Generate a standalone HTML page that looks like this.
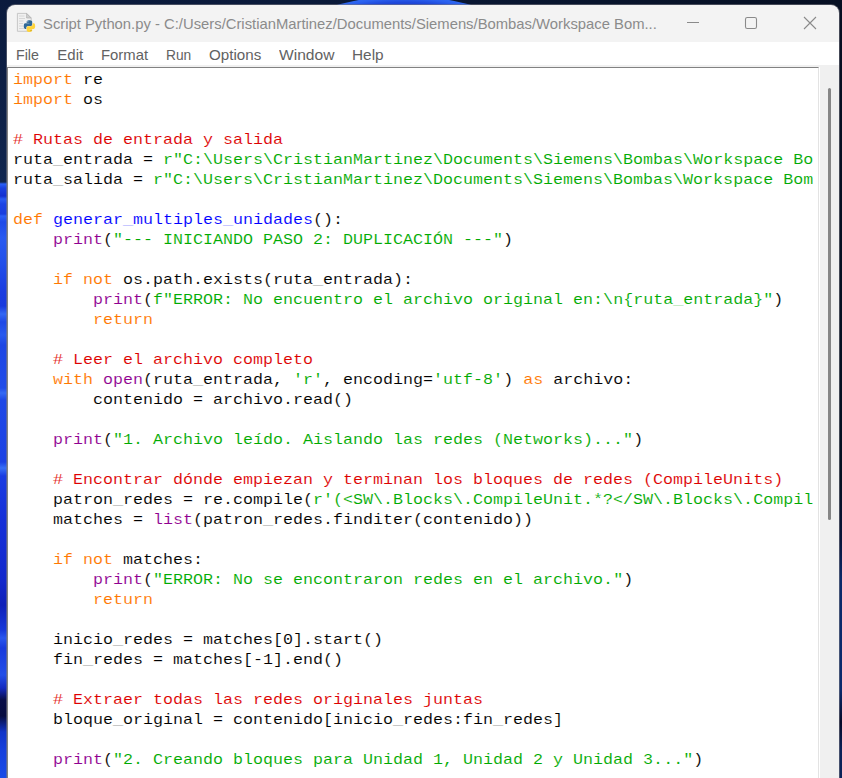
<!DOCTYPE html>
<html>
<head>
<meta charset="utf-8">
<title>Script Python.py</title>
<style>
  html, body { margin: 0; padding: 0; }
  body {
    width: 842px; height: 778px; overflow: hidden; position: relative;
    background: #0a1a38;
    font-family: "Liberation Sans", sans-serif;
  }
  #wall-left {
    position: absolute; left: 0; top: 0; width: 12px; height: 778px;
    background: linear-gradient(to bottom,
      #0b1b3d 0px, #0e2148 120px, #10264f 182px, #2a60f6 184px, #1b42e0 188px,
      #1430d0 196px, #295cf2 199px, #1c44e4 204px, #193ede 214px, #2c60f6 216px,
      #1e4ae8 222px, #285af0 238px, #2250ea 262px, #1a3ce0 292px, #183ade 306px,
      #3368f4 314px, #1e48e6 322px, #285aee 335px, #1d46e4 345px, #204ce8 388px,
      #346af4 393px, #1e48e6 400px, #1c42e4 462px, #3870f6 468px, #1a3ce2 476px,
      #1630d8 520px, #1228cc 580px, #0e20b8 605px, #1638da 630px, #2856ee 638px,
      #183adc 648px, #224ee8 675px, #142ac0 688px, #080e48 700px, #070c40 716px,
      #1034c8 732px, #1640dc 750px, #1a4ce8 778px);
  }
  #wall-right {
    position: absolute; left: 834px; top: 0; width: 8px; height: 778px;
    background: linear-gradient(to bottom,
      #060f22 0px, #041022 480px, #08153a 540px, #0a2a6a 580px, #0a2a6c 690px,
      #050a28 722px, #0a2258 750px, #0a2258 778px);
  }
  #wall-top {
    position: absolute; left: 0; top: 0; width: 842px; height: 12px;
    background: linear-gradient(to right, #0b1b3d 0px, #0a1a3a 300px, #08142c 600px, #060f22 842px);
  }
  #bloom {
    position: absolute; left: 147px; top: -4px; width: 514px; height: 514px;
    border-radius: 50%;
    background: radial-gradient(circle closest-side at 50% 50%, #1636c4 0%, #1838c8 95.5%, #1e48da 97.5%, #2a60ee 99%, #2e68f2 100%);
  }
  #win {
    position: absolute; left: 7px; top: 5px; width: 832px; height: 790px;
    background: #f3f3f3;
    border-radius: 8px 8px 0 0;
    overflow: hidden;
    box-shadow: 0 0 0 1px rgba(120,120,130,0.55);
  }
  #title {
    position: absolute; left: 36px; top: 9px; height: 20px; line-height: 20px;
    font-size: 15px; color: #8b8b8b; white-space: nowrap;
    transform-origin: 0 50%; transform: scaleX(0.9875);
  }
  #menubar {
    position: absolute; left: 0; top: 37px; width: 832px; height: 23px; background: #ffffff;
  }
  .mi {
    position: absolute; top: 0.7px; height: 24px; line-height: 24px; font-size: 15px; color: #626262;
    white-space: nowrap; transform-origin: 0 50%;
  }
  #client {
    position: absolute; left: 0; top: 60px; width: 832px; height: 730px; background: #f0f0f0;
  }
  #textframe {
    position: absolute; left: 0px; top: 2px; width: 812px; height: 730px;
    background: #ffffff;
    border-top: 1px solid #828282; border-left: 1px solid #828282;
    border-right: 1px solid #e3e3e3;
    box-sizing: border-box;
  }
  #textclip {
    position: absolute; left: 5px; top: 2px; width: 800px; height: 720px; overflow: hidden;
  }
  pre {
    margin: 0; padding: 0;
    font-family: "Liberation Mono", monospace;
    font-size: 14.5px; line-height: 20px; color: #000000;
    white-space: pre;
    transform: scaleX(1.149425); transform-origin: 0 0;
    -webkit-text-stroke: 0.1px #ffffff;
  }
  .k { color: #ff7700; }
  .c { color: #dd0000; }
  .s { color: #00aa00; }
  .b { color: #900090; }
  .d { color: #0000ff; }
  #sbgap { position: absolute; left: 812px; top: 2px; width: 1px; height: 730px; background: #ffffff; }
  #thumb {
    position: absolute; left: 821px; top: 23px; width: 3px; height: 432px;
    background: #868686; border-radius: 2px;
  }
  svg { position: absolute; overflow: visible; }
</style>
</head>
<body>
<div id="wall-top"></div>
<div id="bloom"></div>
<div id="wall-left"></div>
<div id="wall-right"></div>

<div id="win">
  <!-- app icon -->
  <svg id="icon" style="left:0px; top:0px;" width="40" height="37" viewBox="0 0 40 37">
    <path d="M10.4 8.4 H19.6 L24.2 13 V26.3 H10.4 Z" fill="#f0f0f0" stroke="#c2c2c2" stroke-width="0.9"/>
    <path d="M19.6 8.4 V13 H24.2 Z" fill="#cfcfcf" stroke="#b0b0b0" stroke-width="0.7"/>
    <g stroke="#d0d0d0" stroke-width="0.8">
      <line x1="12" y1="11" x2="17.5" y2="11"/><line x1="12" y1="13.5" x2="18" y2="13.5"/>
      <line x1="12" y1="16" x2="16.5" y2="16"/><line x1="12" y1="18.5" x2="16" y2="18.5"/>
      <line x1="12" y1="21" x2="16" y2="21"/><line x1="12" y1="23.5" x2="17" y2="23.5"/>
    </g>
    <g transform="translate(16.7 15.3) scale(0.1035)">
      <path fill="#306998" d="M54.9 0 C50.3 0 45.9 0.4 42.1 1.1 C30.7 3.1 28.7 7.3 28.7 15.1 V25.4 H55.5 V28.8 H28.7 H18.6 C10.8 28.8 4 33.5 1.9 42.4 C-0.6 52.6 -0.7 59 1.9 69.7 C3.8 77.6 8.3 83.3 16.1 83.3 H25.3 V71 C25.3 62.1 33 54.3 42.1 54.3 H68.9 C76.4 54.3 82.3 48.1 82.3 40.6 V15.1 C82.3 7.8 76.2 2.4 68.9 1.1 C64.3 0.4 59.5 0 54.9 0 Z"/>
      <path fill="#ffd43b" d="M85.6 28.8 V40.7 C85.6 50 77.8 57.7 68.9 57.7 H42.1 C34.8 57.7 28.7 64 28.7 71.4 V96.9 C28.7 104.2 35 108.4 42.1 110.5 C50.6 113 58.7 113.5 68.9 110.5 C75.6 108.5 82.3 104.6 82.3 96.9 V86.7 H55.5 V83.3 H82.3 H95.7 C103.5 83.3 106.4 77.9 109.1 69.7 C111.9 61.3 111.8 53.2 109.1 42.4 C107.2 34.6 103.5 28.8 95.7 28.8 Z"/>
      <circle cx="40.5" cy="13" r="5" fill="#e8eef5"/>
      <circle cx="70.5" cy="98.5" r="5" fill="#b08a10"/>
    </g>
  </svg>
  <div id="title">Script Python.py - C:/Users/CristianMartinez/Documents/Siemens/Bombas/Workspace Bom...</div>

  <!-- caption buttons -->
  <svg style="left:0; top:0;" width="832" height="37" viewBox="0 0 832 37" fill="none" stroke="#8a8a8a" stroke-width="1.1">
    <line x1="680" y1="17.5" x2="692" y2="17.5"/>
    <rect x="738.5" y="12.5" width="11" height="11" rx="1.8"/>
    <path d="M797 12 L809 24 M809 12 L797 24"/>
  </svg>

  <div id="menubar">
    <span class="mi" style="left:9px;transform:scaleX(0.95)">File</span>
    <span class="mi" style="left:50.3px;transform:scaleX(1.0)">Edit</span>
    <span class="mi" style="left:94px;transform:scaleX(0.99)">Format</span>
    <span class="mi" style="left:159px;transform:scaleX(0.918)">Run</span>
    <span class="mi" style="left:201.5px;transform:scaleX(1.01)">Options</span>
    <span class="mi" style="left:271.5px;transform:scaleX(1.039)">Window</span>
    <span class="mi" style="left:345.2px;transform:scaleX(1.025)">Help</span>
  </div>

  <div id="client">
    <div id="textframe">
      <div id="textclip">
<pre><span class="k">import</span> re
<span class="k">import</span> os

<span class="c"># Rutas de entrada y salida</span>
ruta_entrada = <span class="s">r"C:\Users\CristianMartinez\Documents\Siemens\Bombas\Workspace Bombas\Exportado.xml"</span>
ruta_salida = <span class="s">r"C:\Users\CristianMartinez\Documents\Siemens\Bombas\Workspace Bombas\Salida.xml"</span>

<span class="k">def</span> <span class="d">generar_multiples_unidades</span>():
    <span class="b">print</span>(<span class="s">"--- INICIANDO PASO 2: DUPLICACIÓN ---"</span>)

    <span class="k">if</span> <span class="k">not</span> os.path.exists(ruta_entrada):
        <span class="b">print</span>(<span class="s">f"ERROR: No encuentro el archivo original en:\n{ruta_entrada}"</span>)
        <span class="k">return</span>

    <span class="c"># Leer el archivo completo</span>
    <span class="k">with</span> <span class="b">open</span>(ruta_entrada, <span class="s">'r'</span>, encoding=<span class="s">'utf-8'</span>) <span class="k">as</span> archivo:
        contenido = archivo.read()

    <span class="b">print</span>(<span class="s">"1. Archivo leído. Aislando las redes (Networks)..."</span>)

    <span class="c"># Encontrar dónde empiezan y terminan los bloques de redes (CompileUnits)</span>
    patron_redes = re.compile(<span class="s">r'(&lt;SW\.Blocks\.CompileUnit.*?&lt;/SW\.Blocks\.CompileUnit&gt;)', re.DOTALL</span>)
    matches = <span class="b">list</span>(patron_redes.finditer(contenido))

    <span class="k">if</span> <span class="k">not</span> matches:
        <span class="b">print</span>(<span class="s">"ERROR: No se encontraron redes en el archivo."</span>)
        <span class="k">return</span>

    inicio_redes = matches[0].start()
    fin_redes = matches[-1].end()

    <span class="c"># Extraer todas las redes originales juntas</span>
    bloque_original = contenido[inicio_redes:fin_redes]

    <span class="b">print</span>(<span class="s">"2. Creando bloques para Unidad 1, Unidad 2 y Unidad 3..."</span>)
</pre>
      </div>
    </div>
    <div id="sbgap"></div>
    <div id="thumb"></div>
  </div>
</div>
</body>
</html>
